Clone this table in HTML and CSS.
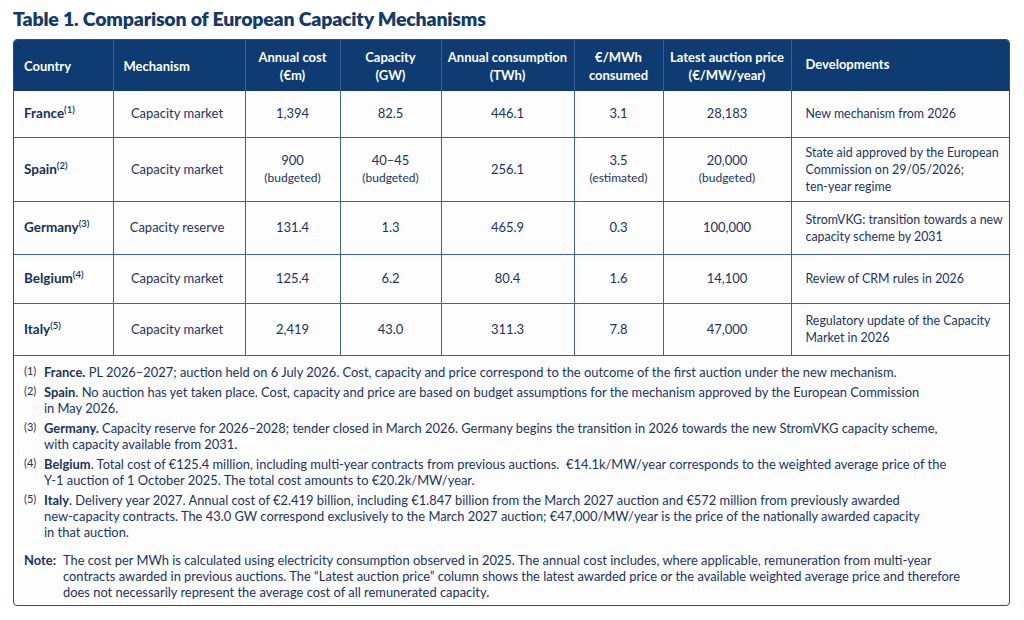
FILE: index.html
```html
<!DOCTYPE html>
<html lang="en">
<head>
	<meta charset="UTF-8">
	<title>Table 1. Comparison of European Capacity Mechanisms</title>
	<link rel="stylesheet" href="styles.css">
</head>
<body>

	<div class="page">
		<h1 class="title">Table 1. Comparison of European Capacity Mechanisms</h1>

		<div class="box">
			<table class="cm">
				<colgroup>
					<col style="width:99px">
					<col style="width:132px">
					<col style="width:95px">
					<col style="width:101px">
					<col style="width:133px">
					<col style="width:89px">
					<col style="width:128px">
					<col>
				</colgroup>
				<thead>
					<tr>
						<th class="left">Country</th>
						<th class="left pad-mech">Mechanism</th>
						<th>Annual cost<br>(€m)</th>
						<th>Capacity<br>(GW)</th>
						<th>Annual consumption<br>(TWh)</th>
						<th>€/MWh<br>consumed</th>
						<th>Latest auction price<br>(€/MW/year)</th>
						<th class="left dev">Developments</th>
					</tr>
				</thead>
				<tbody>
					<tr class="r-fr">
						<td class="country">France<sup>(1)</sup></td>
						<td>Capacity market</td>
						<td>1,394</td>
						<td>82.5</td>
						<td>446.1</td>
						<td>3.1</td>
						<td>28,183</td>
						<td class="dev">New mechanism from 2026</td>
					</tr>
					<tr class="r-es">
						<td class="country">Spain<sup>(2)</sup></td>
						<td>Capacity market</td>
						<td>900<span class="sub">(budgeted)</span></td>
						<td>40–45<span class="sub">(budgeted)</span></td>
						<td>256.1</td>
						<td>3.5<span class="sub">(estimated)</span></td>
						<td>20,000<span class="sub">(budgeted)</span></td>
						<td class="dev">State aid approved by the European<br>Commission on 29/05/2026;<br>ten-year regime</td>
					</tr>
					<tr class="r-de">
						<td class="country">Germany<sup>(3)</sup></td>
						<td>Capacity reserve</td>
						<td>131.4</td>
						<td>1.3</td>
						<td>465.9</td>
						<td>0.3</td>
						<td>100,000</td>
						<td class="dev">StromVKG: transition towards a new<br>capacity scheme by 2031</td>
					</tr>
					<tr class="r-be">
						<td class="country">Belgium<sup>(4)</sup></td>
						<td>Capacity market</td>
						<td>125.4</td>
						<td>6.2</td>
						<td>80.4</td>
						<td>1.6</td>
						<td>14,100</td>
						<td class="dev">Review of CRM rules in 2026</td>
					</tr>
					<tr class="r-it">
						<td class="country">Italy<sup>(5)</sup></td>
						<td>Capacity market</td>
						<td>2,419</td>
						<td>43.0</td>
						<td>311.3</td>
						<td>7.8</td>
						<td>47,000</td>
						<td class="dev">Regulatory update of the Capacity<br>Market in 2026</td>
					</tr>
				</tbody>
			</table>

			<div class="notes">
				<div class="fn">
					<span class="mark">(1)</span>
					<p><b>France.</b> PL 2026–2027; auction held on 6 July 2026. Cost, capacity and price correspond to the outcome of the first auction under the new mechanism.</p>
				</div>
				<div class="fn">
					<span class="mark">(2)</span>
					<p><b>Spain</b>. No auction has yet taken place. Cost, capacity and price are based on budget assumptions for the mechanism approved by the European Commission<br>in May 2026.</p>
				</div>
				<div class="fn">
					<span class="mark">(3)</span>
					<p><b>Germany.</b> Capacity reserve for 2026–2028; tender closed in March 2026. Germany begins the transition in 2026 towards the new StromVKG capacity scheme,<br>with capacity available from 2031.</p>
				</div>
				<div class="fn">
					<span class="mark">(4)</span>
					<p><b>Belgium</b>. Total cost of €125.4 million, including multi-year contracts from previous auctions.&nbsp; €14.1k/MW/year corresponds to the weighted average price of the<br>Y-1 auction of 1 October 2025. The total cost amounts to €20.2k/MW/year.</p>
				</div>
				<div class="fn">
					<span class="mark">(5)</span>
					<p><b>Italy</b>. Delivery year 2027. Annual cost of €2.419 billion, including €1.847 billion from the March 2027 auction and €572 million from previously awarded<br>new-capacity contracts. The 43.0 GW correspond exclusively to the March 2027 auction; €47,000/MW/year is the price of the nationally awarded capacity<br>in that auction.</p>
				</div>
				<div class="fn note">
					<span class="mark">Note:</span>
					<p>The cost per MWh is calculated using electricity consumption observed in 2025. The annual cost includes, where applicable, remuneration from multi-year<br>contracts awarded in previous auctions. The “Latest auction price” column shows the latest awarded price or the available weighted average price and therefore<br>does not necessarily represent the average cost of all remunerated capacity.</p>
				</div>
			</div>
		</div>
	</div>

</body>
</html>
```

FILE: styles.css
```css
*{
	box-sizing: border-box;
}
body{
	margin: 0;
	padding: 0;
	background-color: #fff;
	font-family: "Lato", "Liberation Sans", sans-serif;
	color: #1b3360;
}
/*============================================*/
.page{
	padding: 6px 0 0 13px;
	width: 1010px;
}
.title{
	margin: 0 0 8px 0;
	font-size: 19.5px;
	line-height: 25px;
	font-weight: 800;
	color: #123a6b;
	letter-spacing: -0.2px;
}

/*table box*/
.box{
	width: 997px;
	border: 1.5px solid #234d8c;
	border-radius: 4px;
	overflow: hidden;
	background-color: #fdfdfe;
}
.cm{
	width: 100%;
	border-collapse: collapse;
	table-layout: fixed;
	font-size: 13px;
}
.cm th{
	background-color: #0e3c72;
	color: #fff;
	font-weight: 700;
	line-height: 18px;
	height: 51px;
	padding: 0 6px;
	text-align: center;
	border-left: 1px solid #3a5f95;
	vertical-align: middle;
}
.cm th:first-child{
	border-left: none;
}
.cm th.left{
	text-align: left;
	padding-left: 10px;
}
.cm th.pad-mech{
	padding-left: 10px;
}
.cm th.dev{
	padding-left: 14px;
	padding-bottom: 4px;
}
.cm td{
	text-align: center;
	vertical-align: middle;
	line-height: 17px;
	padding: 0 6px;
	border-left: 1px solid #3d62a0;
	border-top: 1px solid #3d62a0;
	color: #1b3360;
}
.cm td:first-child{
	border-left: none;
}
.cm tbody tr:first-child td{
	border-top: none;
}
.cm td.country{
	text-align: left;
	padding-left: 10px;
	font-weight: 700;
	font-size: 13.5px;
	color: #14305c;
}
.cm td:nth-child(2){
	padding-right: 10px;
}
.cm td.dev{
	text-align: left;
	padding-left: 14px;
	padding-right: 0;
	white-space: nowrap;
	font-size: 12.4px;
}
.cm sup{
	font-size: 9.5px;
	font-weight: 600;
	vertical-align: 5px;
	line-height: 0;
}
.sub{
	display: block;
	font-size: 12px;
}
.r-fr{ height: 46px; }
.r-es{ height: 64px; }
.r-de{ height: 53px; }
.r-be{ height: 49px; }
.r-it{ height: 52px; }
.cm tbody tr:last-child td{
	border-bottom: 1px solid #3d62a0;
}

/*footnotes*/
.notes{
	padding: 8px 10px 5px 10px;
	font-size: 12.9px;
	line-height: 16px;
	color: #1b3360;
}
.fn{
	display: grid;
	grid-template-columns: 20px 1fr;
	margin-bottom: 4px;
}
.fn p{
	margin: 0;
}
.fn .mark{
	font-size: 11px;
	line-height: 13px;
}
.fn.note{
	grid-template-columns: 39px 1fr;
	margin-top: 12px;
	margin-bottom: 0;
}
.fn.note .mark{
	font-size: 12.9px;
	line-height: 16px;
	font-weight: 700;
}
```
